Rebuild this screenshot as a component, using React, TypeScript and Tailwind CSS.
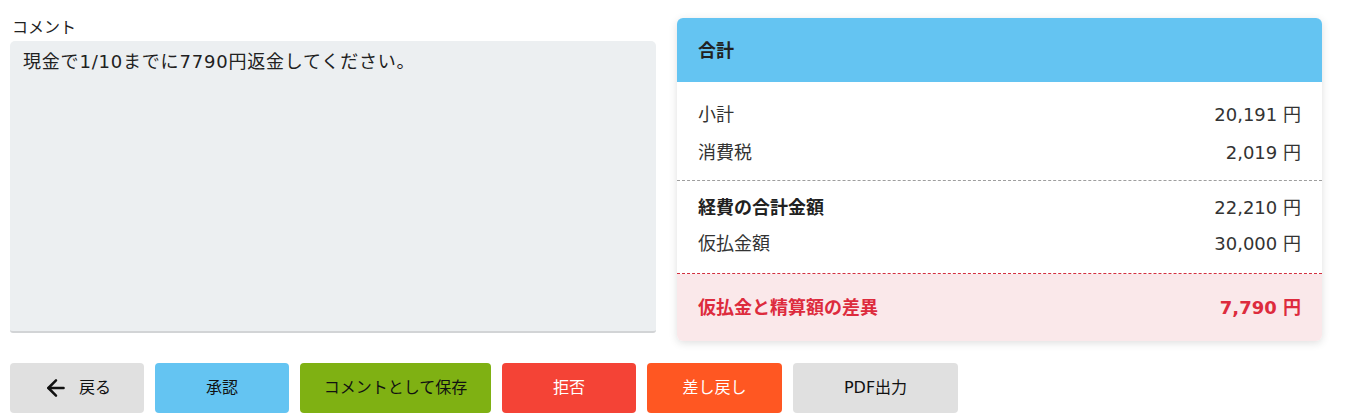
import { ArrowLeft } from "lucide-react";

const font = {
  fontFamily: '"DejaVu Sans", "Noto Sans CJK JP", sans-serif',
};

function Row({ label, value, bold }: { label: string; value: string; bold?: boolean }) {
  return (
    <div className="flex items-center justify-between h-6 text-[18px]">
      <span className={bold ? "font-bold text-[#212121]" : "text-[#333]"}>{label}</span>
      <span className="text-[#333]">{value}</span>
    </div>
  );
}

export default function App() {
  return (
    <div className="bg-white w-[1353px] h-[419px] overflow-hidden text-[#212121]" style={font}>
      <div className="h-0 shadow-[0_2px_10px_rgba(0,0,0,0.14)]" />

      <div className="pl-[10px] pr-[31px] pt-[18px] flex gap-[21px]">
        <div className="w-[646px] flex flex-col">
          <label className="pl-[2px] text-[16px] leading-5 h-[23px]">コメント</label>
          <div className="h-[292px] bg-[#eceff1] rounded-t-[5px] rounded-b-[3px] border-b-2 border-[#d2d4d6] px-[13px] pt-[9px] text-[18px] leading-6 tracking-[0.8px] text-[#212121]">
            現金で1/10までに7790円返金してください。
          </div>
        </div>

        <div className="w-[645px] rounded-[6px] overflow-hidden bg-white shadow-[0_2px_8px_rgba(0,0,0,0.13)]">
          <div className="h-16 bg-[#64c4f2] px-[21px] flex items-center">
            <span className="text-[18px] font-bold">合計</span>
          </div>
          <div className="px-[21px] pt-5 pb-4 flex flex-col gap-[14px] border-b border-dashed border-[#9e9e9e]">
            <Row label="小計" value="20,191 円" />
            <Row label="消費税" value="2,019 円" />
          </div>
          <div className="px-[21px] pt-[14px] pb-[18px] flex flex-col gap-3 border-b border-dashed border-[#d32f3f]">
            <Row label="経費の合計金額" value="22,210 円" bold />
            <Row label="仮払金額" value="30,000 円" />
          </div>
          <div className="h-[67px] bg-[#fae8ea] px-[21px] flex items-center justify-between text-[18px] font-bold text-[#dd2b3d]">
            <span>仮払金と精算額の差異</span>
            <span>7,790 円</span>
          </div>
        </div>
      </div>

      <div className="pl-[10px] mt-[22px] flex gap-[11px] text-[16px]">
        <button className="h-[50px] w-[134px] rounded-[4px] bg-[#e0e0e0] flex items-center justify-center gap-[10px] text-[#111]">
          <ArrowLeft size={26} strokeWidth={2.3} />
          <span>戻る</span>
        </button>
        <button className="h-[50px] w-[134px] rounded-[4px] bg-[#64c4f2] text-[#111]">承認</button>
        <button className="h-[50px] w-[191px] rounded-[4px] bg-[#7fb113] text-[#111]">コメントとして保存</button>
        <button className="h-[50px] w-[134px] rounded-[4px] bg-[#f44336] text-white">拒否</button>
        <button className="h-[50px] w-[135px] rounded-[4px] bg-[#ff5722] text-white">差し戻し</button>
        <button className="h-[50px] w-[165px] rounded-[4px] bg-[#e0e0e0] text-[#111]">PDF出力</button>
      </div>
    </div>
  );
}
